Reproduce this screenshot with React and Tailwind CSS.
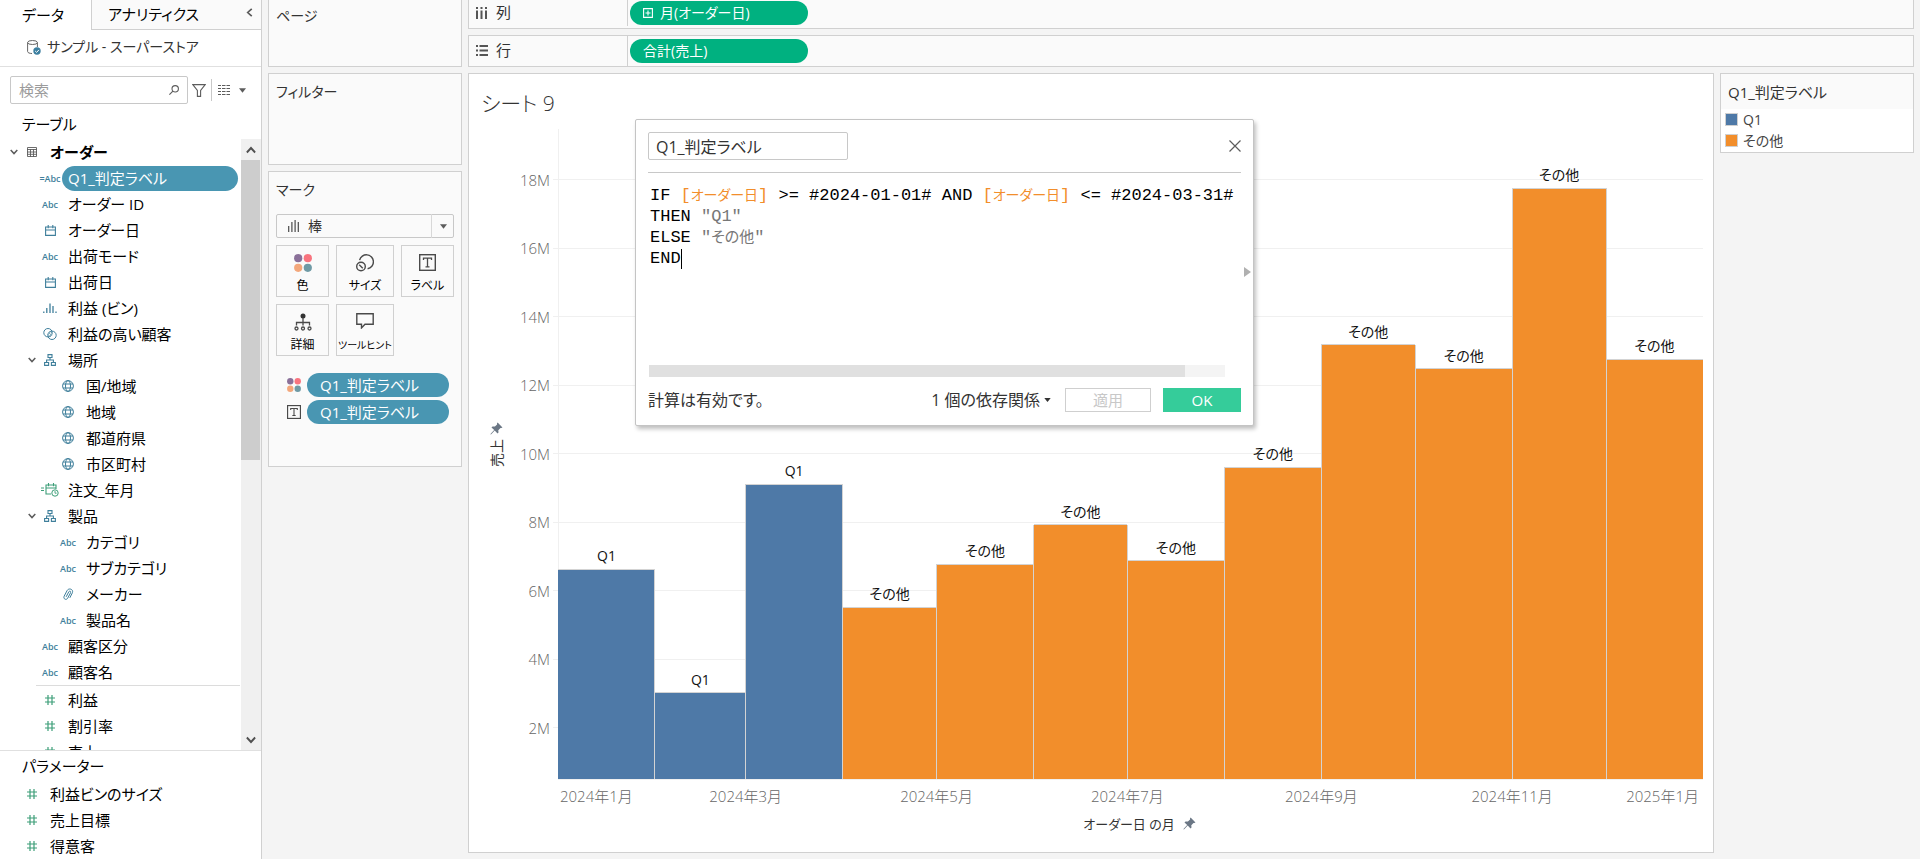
import { useState } from "react";

const FIELDS = [
    { level: 0, icon: "table", label: "オーダー", open: true },
    { level: 1, icon: "calcAbc", label: "Q1_判定ラベル", selected: true },
    { level: 1, icon: "abc", label: "オーダー ID" },
    { level: 1, icon: "date", label: "オーダー日" },
    { level: 1, icon: "abc", label: "出荷モード" },
    { level: 1, icon: "date", label: "出荷日" },
    { level: 1, icon: "bin", label: "利益 (ビン)" },
    { level: 1, icon: "set", label: "利益の高い顧客" },
    { level: 1, icon: "tree", label: "場所", open: true },
    { level: 2, icon: "globe", label: "国/地域" },
    { level: 2, icon: "globe", label: "地域" },
    { level: 2, icon: "globe", label: "都道府県" },
    { level: 2, icon: "globe", label: "市区町村" },
    { level: 1, icon: "calcDate", label: "注文_年月" },
    { level: 1, icon: "tree", label: "製品", open: true },
    { level: 2, icon: "abc", label: "カテゴリ" },
    { level: 2, icon: "abc", label: "サブカテゴリ" },
    { level: 2, icon: "clip", label: "メーカー" },
    { level: 2, icon: "abc", label: "製品名" },
    { level: 1, icon: "abc", label: "顧客区分" },
    { level: 1, icon: "abc", label: "顧客名" },
];

const MEASURES = ["利益", "割引率", "売上"];
const PARAMETERS = ["利益ビンのサイズ", "売上目標", "得意客"];

// days = width of the month on the date axis, value in millions
const MONTHS = [
    { days: 31, value: 6.62, label: "Q1" },
    { days: 29, value: 3.02, label: "Q1" },
    { days: 31, value: 9.1, label: "Q1" },
    { days: 30, value: 5.51, label: "その他" },
    { days: 31, value: 6.77, label: "その他" },
    { days: 30, value: 7.92, label: "その他" },
    { days: 31, value: 6.87, label: "その他" },
    { days: 31, value: 9.6, label: "その他" },
    { days: 30, value: 13.18, label: "その他" },
    { days: 31, value: 12.48, label: "その他" },
    { days: 30, value: 17.75, label: "その他" },
    { days: 31, value: 12.75, label: "その他" },
];

const X_TICKS = [
    { month: 0, label: "2024年1月" },
    { month: 2, label: "2024年3月" },
    { month: 4, label: "2024年5月" },
    { month: 6, label: "2024年7月" },
    { month: 8, label: "2024年9月" },
    { month: 10, label: "2024年11月" },
    { month: 12, label: "2025年1月" },
];

const Y_TICKS = [2, 4, 6, 8, 10, 12, 14, 16, 18];
const Y_MIN = 0.5;
const Y_MAX = 19.48;
const YEAR = 366;

const COLORS = { Q1: "#4e79a7", その他: "#f28e2b" };

/* ---------- icons ---------- */

function Chevron({ className }) {
    return (
        <svg viewBox="0 0 8 6" className={className} fill="none" stroke="currentColor" strokeWidth="1.5">
            <path d="M.7 1l3.3 3.6L7.3 1" />
        </svg>
    );
}

function Caret({ className }) {
    return (
        <svg viewBox="0 0 8 5" className={className} fill="currentColor">
            <path d="M0 0h8L4 5z" />
        </svg>
    );
}

function Pin() {
    return (
        <svg viewBox="0 0 13 13" className="w-[13px] h-[13px] text-[#6b7785]" fill="currentColor">
            <path d="M7.6.6l4.9 4.9-1.2.6-.8-.1-2.2 2.2.2 2.2-1 1L4.7 8.6 1.2 12.2.4 12.5.7 11.7 4.2 8.1 1.5 5.4l1-1 2.4.2L7.1 2.4 7 1.5z" />
        </svg>
    );
}

function ColorDots({ className }) {
    return (
        <svg viewBox="0 0 18 18" className={className}>
            <circle cx="4.2" cy="4.2" r="4.1" fill="#8a7099" />
            <circle cx="13.8" cy="4.2" r="4.1" fill="#f8747f" />
            <circle cx="4.2" cy="13.8" r="4.1" fill="#f3a77b" />
            <circle cx="13.8" cy="13.8" r="4.1" fill="#6f9aa5" />
        </svg>
    );
}

function LabelIcon({ className }) {
    return (
        <svg viewBox="0 0 17 17" className={className} fill="none" stroke="#4a4a4a">
            <rect x=".7" y=".7" width="15.6" height="15.6" strokeWidth="1.4" />
            <path d="M4.5 6V4.2h8V6M8.5 4.2v8.6M6.5 12.8h4" strokeWidth="1.3" />
        </svg>
    );
}

function HashIcon() {
    return (
        <svg viewBox="0 0 10 10" className="w-[10px] h-[10px]" stroke="#3d9e78" fill="none">
            <path d="M3 0v10M7 0v10M0 3h10M0 7h10" strokeWidth="1.2" />
        </svg>
    );
}

function FieldIcon({ name }) {
    if (name === "abc" || name === "calcAbc") {
        return (
            <span className="text-[9px] leading-none font-semibold text-[#3f7f9b] font-['Open_Sans',sans-serif]">
                {name === "calcAbc" ? "=Abc" : "Abc"}
            </span>
        );
    }
    if (name === "table") {
        return (
            <svg viewBox="0 0 10 10" className="w-[10px] h-[10px]" stroke="#5c5c5c" fill="none">
                <path d="M.5.5h9v9h-9zM0 2.5h10M0 5h10M0 7.3h10M3.5 2v8M6.5 2v8" strokeWidth=".9" />
            </svg>
        );
    }
    if (name === "date") {
        return (
            <svg viewBox="0 0 11 11" className="w-[11px] h-[11px]" stroke="#3f7f9b" fill="none">
                <path d="M.6 2h9.8v8.4H.6zM.6 5h9.8M3.2 0v3.2M7.8 0v3.2" strokeWidth="1.1" />
            </svg>
        );
    }
    if (name === "calcDate") {
        return (
            <svg viewBox="0 0 18 14" className="w-[18px] h-[14px]" stroke="#3d9e78" fill="none">
                <path d="M0 5h3M0 7.5h3M10 11H5V2h10v4M5 5h10M7.5 0v3.2M12.5 0v3.2" strokeWidth="1.1" />
                <circle cx="14" cy="10" r="3.2" />
                <path d="M14 8v2.2h1.6" strokeWidth=".9" />
            </svg>
        );
    }
    if (name === "bin") {
        return (
            <svg viewBox="0 0 14 10" className="w-[14px] h-[10px]" stroke="#3f7f9b" fill="none">
                <path d="M.8 8.5V10M3.8 5v5M7 .5V10M10 3v7M13 8.5V10" strokeWidth="1.3" />
            </svg>
        );
    }
    if (name === "set") {
        return (
            <svg viewBox="0 0 14 12" className="w-[14px] h-[12px]" stroke="#3f7f9b" fill="none">
                <circle cx="5" cy="4.7" r="4.2" />
                <circle cx="9" cy="7.3" r="4.2" />
                <path d="M5 6.5l2.5 2.5M5.8 4.6l3 3M7 3.2l2 2" strokeWidth=".8" />
            </svg>
        );
    }
    if (name === "tree") {
        return (
            <svg viewBox="0 0 12 12" className="w-[12px] h-[12px]" stroke="#3f7f9b" fill="none">
                <path d="M4 .6h4v2.9H4zM.6 8.5h4v2.9h-4zM7.4 8.5h4v2.9h-4zM6 3.5V6M2.6 8.5V6h6.8v2.5" strokeWidth="1.1" />
            </svg>
        );
    }
    if (name === "globe") {
        return (
            <svg viewBox="0 0 12 12" className="w-[12px] h-[12px]" stroke="#3f7f9b" fill="none">
                <circle cx="6" cy="6" r="5.4" />
                <ellipse cx="6" cy="6" rx="2.5" ry="5.4" />
                <path d="M1 4h10M1 8h10" />
            </svg>
        );
    }
    return (
        <svg viewBox="0 0 12 13" className="w-[12px] h-[13px]" stroke="#3f7f9b" fill="none" strokeLinecap="round">
            <path d="M4.3 8.5l2.5-4.7c.8-1.4 2.500-.4 1.800.9L5.6 10.3C4.300 12.500 1 11 2.100 8.300L5 2.700C6.600-.4 11.500 1 10.500 4.500L8 9.500" />
        </svg>
    );
}

/* ---------- data pane ---------- */

const INDENT = ["pl-2", "pl-[26px]", "pl-[44px]"];

function FieldRow({ level, icon, label, open, selected }) {
    return (
        <li className={`flex items-center h-[26px] shrink-0 ${INDENT[level]}`}>
            <span className="w-3 flex justify-center">
                {open && <Chevron className="w-2 h-[6px] text-[#5c5c5c]" />}
            </span>
            <span className="w-6 flex justify-center">
                {icon === "hash" ? <HashIcon /> : <FieldIcon name={icon} />}
            </span>
            <span
                className={`pl-[6px] whitespace-nowrap h-[25px] leading-[25px] ${
                    selected ? "flex-1 mr-[3px] rounded-full bg-[#4996b2] text-white" : ""
                } ${level === 0 && icon === "table" ? "font-bold" : ""}`}
            >
                {label}
            </span>
        </li>
    );
}

function DataPane() {
    return (
        <aside className="w-[262px] shrink-0 flex flex-col bg-white border-r border-[#d0d0d0] text-black">
            <div className="flex h-[30px] leading-none">
                <button className="w-[91px] pl-[22px] text-left">データ</button>
                <div className="flex-1 flex items-center justify-between pl-4 pr-[7px] bg-[#fafafa] border-l border-b border-[#d0d0d0]">
                    <button>アナリティクス</button>
                    <button aria-label="折りたたむ" className="pb-1">
                        <Chevron className="w-[9px] h-[7px] rotate-90 text-[#5c5c5c]" />
                    </button>
                </div>
            </div>

            <div className="h-[37px] flex items-center gap-[6px] pl-[27px] pb-[2px] border-b border-[#e0e0e0] text-sm text-[#333]">
                <svg viewBox="0 0 14 15" className="w-[14px] h-[15px]" fill="none" stroke="#666">
                    <ellipse cx="5.5" cy="2.5" rx="4.9" ry="2" />
                    <path d="M.6 2.5v9c0 1.2 2 2 4.4 2M10.4 2.5V7" />
                    <circle cx="10" cy="11" r="3.7" fill="#3c7fa0" stroke="none" />
                    <path d="M8.2 11l1.4 1.4 2.3-2.5" stroke="#fff" />
                </svg>
                <span>サンプル - スーパーストア</span>
            </div>

            <div className="flex items-center pt-[9px] pl-[10px]">
                <label className="flex items-center w-[178px] h-7 px-2 border border-[#c8c8c8] rounded-xs">
                    <input
                        aria-label="検索"
                        placeholder="検索"
                        className="flex-1 min-w-0 outline-none placeholder:text-[#9b9b9b]"
                    />
                    <svg viewBox="0 0 10 10" className="w-[10px] h-[10px]" fill="none" stroke="#5c5c5c" strokeWidth="1.1">
                        <circle cx="6.2" cy="3.8" r="3.2" />
                        <path d="M3.9 6.1L.4 9.6" />
                    </svg>
                </label>
                <button aria-label="フィルター" className="ml-1">
                    <svg viewBox="0 0 14 13" className="w-[14px] h-[13px]" fill="none" stroke="#5c5c5c" strokeWidth="1.1">
                        <path d="M.8.6h12.4L8.6 6.5v5.9H5.4V6.5z" />
                    </svg>
                </button>
                <span className="w-px h-[22px] ml-[5px] bg-[#c8c8c8]" />
                <button aria-label="表示" className="flex items-center gap-[9px] ml-[6px] text-[#5c5c5c]">
                    <svg viewBox="0 0 12 10" className="w-3 h-[10px]" stroke="currentColor" strokeWidth="1">
                        <path d="M0 .5h3M0 3.5h3M0 6.5h3M0 9.5h3M4 .5h3.5M4 3.5h3.5M4 6.5h3.5M4 9.5h3.5M8.5 .5H12M8.5 3.5H12M8.5 6.5H12M8.5 9.5H12" />
                    </svg>
                    <Caret className="w-[7px] h-[5px]" />
                </button>
            </div>

            <h2 className="h-[35px] pl-[22px] pt-[7px] leading-[26px]">テーブル</h2>

            <div className="flex flex-1 min-h-0">
                <ul className="flex-1 flex flex-col overflow-hidden">
                    {FIELDS.map((f) => (
                        <FieldRow key={f.label} {...f} />
                    ))}
                    <li className="h-[2px] shrink-0 ml-9 mr-px border-t border-[#dcdcdc]" />
                    {MEASURES.map((m) => (
                        <FieldRow key={m} level={1} icon="hash" label={m} />
                    ))}
                </ul>
                <div className="w-5 flex flex-col justify-between bg-[#f0f0f0] text-[#505050]">
                    <div>
                        <div className="h-[21px] flex items-center justify-center">
                            <Chevron className="w-[10px] h-[8px] rotate-180" />
                        </div>
                        <div className="w-[19px] h-[300px] bg-[#cdcdcd]" />
                    </div>
                    <div className="h-[21px] flex items-center justify-center">
                        <Chevron className="w-[10px] h-[8px]" />
                    </div>
                </div>
            </div>

            <div className="border-t border-[#e0e0e0]">
                <h2 className="h-[30px] pl-[22px] leading-[30px]">パラメーター</h2>
                <ul>
                    {PARAMETERS.map((p) => (
                        <FieldRow key={p} level={0} icon="hash" label={p} />
                    ))}
                </ul>
            </div>
        </aside>
    );
}

/* ---------- shelves and marks ---------- */

function MarkButton({ label, small, children }) {
    return (
        <button
            className={`h-[52px] flex flex-col items-center justify-between pt-2 pb-px border border-[#d0d0d0] leading-[18px] whitespace-nowrap text-black ${
                small ? "text-[10px]" : "text-xs/[18px]"
            }`}
        >
            {children}
            <span>{label}</span>
        </button>
    );
}

function MarksCard() {
    return (
        <section className="h-[296px] px-[7px] bg-[#fafafa] border border-[#d0d0d0]">
            <h2 className="h-[42px] pt-[7px] leading-[22px] text-sm/[22px]">マーク</h2>
            <div className="relative">
                <select
                    aria-label="マークの種類"
                    className="w-full h-6 pl-[31px] appearance-none border border-[#c8c8c8] rounded-xs text-sm leading-none text-[#333]"
                >
                    <option>棒</option>
                </select>
                <svg viewBox="0 0 11 12" className="absolute left-3 top-[6px] w-[11px] h-3" stroke="#4a4a4a" strokeWidth="1.2">
                    <path d="M.7 6v6M3.9 2v10M7.1 0v12M10.3 2v10" />
                </svg>
                <span className="absolute right-0 top-0 w-[23px] h-6 flex items-center justify-center border-l border-[#d8d8d8] text-[#5c5c5c] pointer-events-none">
                    <Caret className="w-[7px] h-[5px]" />
                </span>
            </div>

            <div className="grid grid-cols-[53px_58px_53px] gap-[7px] mt-[7px]">
                <MarkButton label="色">
                    <ColorDots className="w-[18px] h-[18px]" />
                </MarkButton>
                <MarkButton label="サイズ">
                    <svg viewBox="0 0 18 18" className="w-[18px] h-[18px]" fill="none" stroke="#4a4a4a" strokeWidth="1.4">
                        <path d="M3.6 6.2a7 7 0 1 1 8 8.5" />
                        <circle cx="5" cy="12.5" r="4.3" />
                        <path d="M3.2 10.7l3.6 3.6" />
                    </svg>
                </MarkButton>
                <MarkButton label="ラベル">
                    <LabelIcon className="w-[17px] h-[17px]" />
                </MarkButton>
                <MarkButton label="詳細">
                    <svg viewBox="0 0 18 18" className="w-[18px] h-[18px]" fill="none" stroke="#4a4a4a" strokeWidth="1.3">
                        <circle cx="9" cy="3" r="2.5" fill="#333" stroke="none" />
                        <path d="M9 5v7.5M2.5 12.5V9.5h13v3" />
                        <circle cx="2.5" cy="15.5" r="1.5" />
                        <circle cx="9" cy="15.5" r="1.5" />
                        <circle cx="15.5" cy="15.5" r="1.5" />
                    </svg>
                </MarkButton>
                <MarkButton label="ツールヒント" small>
                    <svg viewBox="0 0 18 16" className="w-[18px] h-4" fill="none" stroke="#4a4a4a" strokeWidth="1.4">
                        <path d="M.8.8h16.4v10.4H9L5.5 14.9v-3.7H.8z" />
                    </svg>
                </MarkButton>
            </div>

            <div className="flex flex-col gap-[3px] mt-[17px] pl-[11px] pr-[5px]">
                <div className="flex items-center gap-[6px]">
                    <ColorDots className="w-[14px] h-[14px]" />
                    <button className="flex-1 h-6 pl-[13px] rounded-full bg-[#4996b2] text-left leading-6 text-white">Q1_判定ラベル</button>
                </div>
                <div className="flex items-center gap-[6px]">
                    <LabelIcon className="w-[14px] h-[14px]" />
                    <button className="flex-1 h-6 pl-[13px] rounded-full bg-[#4996b2] text-left leading-6 text-white">Q1_判定ラベル</button>
                </div>
            </div>
        </section>
    );
}

function Shelf({ icon, label, className, children }) {
    return (
        <div className={`flex items-center bg-[#fafafa] border border-[#d0d0d0] ${className}`}>
            <div className="w-[159px] self-stretch flex items-center gap-2 pl-[7px] pb-px border-r border-[#d0d0d0]">
                {icon}
                <span>{label}</span>
            </div>
            <button className="w-[178px] h-6 ml-[2px] flex items-center gap-[7px] pl-[13px] rounded-full bg-[#00b180] text-sm/6 text-white">
                {children}
            </button>
        </div>
    );
}

/* ---------- chart ---------- */

const yPos = (v) => `${((Y_MAX - v) / (Y_MAX - Y_MIN)) * 100}%`;
const xPos = (days) => `${(days / YEAR) * 100}%`;
const startOf = (month) => MONTHS.slice(0, month).reduce((sum, m) => sum + m.days, 0);

function Chart() {
    return (
        <svg className="w-full h-full overflow-visible" fontSize="15">
            <g stroke="#f0f0f0" shapeRendering="crispEdges">
                {Y_TICKS.map((t) => (
                    <line key={t} x1="-5" x2="100%" y1={yPos(t)} y2={yPos(t)} />
                ))}
                <line x1="0" x2="0" y1="0" y2="100%" />
                <line x1="0" x2="100%" y1="100%" y2="100%" />
            </g>

            {MONTHS.map((m, i) => (
                <g key={i}>
                    <rect
                        x={xPos(startOf(i))}
                        y={yPos(m.value)}
                        width={xPos(m.days)}
                        height={`${((m.value - Y_MIN) / (Y_MAX - Y_MIN)) * 100}%`}
                        fill={COLORS[m.label]}
                        shapeRendering="crispEdges"
                    />
                    <g stroke="#d3d3d3" shapeRendering="crispEdges">
                        <line x1={xPos(startOf(i))} x2={xPos(startOf(i + 1))} y1={yPos(m.value)} y2={yPos(m.value)} />
                        {i > 0 && (
                            <line
                                x1={xPos(startOf(i))}
                                x2={xPos(startOf(i))}
                                y1={yPos(Math.max(m.value, MONTHS[i - 1].value))}
                                y2="100%"
                            />
                        )}
                    </g>
                    <text
                        x={xPos(startOf(i) + m.days / 2)}
                        y={yPos(m.value)}
                        dy="-8"
                        textAnchor="middle"
                        fontSize="14"
                        fill="#111"
                    >
                        {m.label}
                    </text>
                </g>
            ))}

            <g fill="#666" fontWeight="300">
                {Y_TICKS.map((t) => (
                    <text key={t} x="-8" y={yPos(t)} dy="6" textAnchor="end">
                        {t}M
                    </text>
                ))}
                {X_TICKS.map((t, i) => (
                    <text
                        key={t.label}
                        x={xPos(startOf(t.month))}
                        y="100%"
                        dx={i === 0 ? 2 : i === X_TICKS.length - 1 ? -4 : 0}
                        dy="23"
                        textAnchor={i === 0 ? "start" : i === X_TICKS.length - 1 ? "end" : "middle"}
                    >
                        {t.label}
                    </text>
                ))}
            </g>
        </svg>
    );
}

function Sheet({ children }) {
    return (
        <main className="relative flex-1 min-w-0 flex flex-col bg-white border border-[#d0d0d0]">
            <h1 className="h-[55px] pl-3 pt-[14px] text-[21px] leading-[30px] font-light">シート 9</h1>
            <div className="flex-1 min-h-0 flex pr-[10px]">
                <div className="w-[89px] flex flex-col items-start justify-center gap-1 pb-5 pl-[21px]">
                    <Pin />
                    <span className="rotate-180 text-sm leading-[14px] [writing-mode:vertical-rl] [text-orientation:sideways]">売上</span>
                </div>
                <div className="flex-1 min-w-0">
                    <Chart />
                </div>
            </div>
            <div className="h-[73px] pl-[107px] pr-[10px] pt-9 flex items-start justify-center gap-2 text-[13px] leading-[18px]">
                <span>オーダー日 の月</span>
                <span className="pt-[2px]">
                    <Pin />
                </span>
            </div>
            {children}
        </main>
    );
}

/* ---------- calculation dialog ---------- */

function Field({ name }) {
    return (
        <span className="text-[#f28e2b]">
            [<span className="text-sm/[21px]">{name}</span>]
        </span>
    );
}

function CalcDialog() {
    const [name, setName] = useState("Q1_判定ラベル");

    return (
        <div
            role="dialog"
            aria-label="計算フィールドの編集"
            className="absolute left-[166px] top-[45px] w-[619px] h-[307px] flex flex-col px-3 bg-white border border-[#c4c4c4] rounded-xs shadow-[2px_3px_4px_rgba(0,0,0,0.25)]"
        >
            <div className="h-[53px] shrink-0 flex items-center justify-between border-b border-[#c8c8c8]">
                <input
                    aria-label="名前"
                    value={name}
                    onChange={(e) => setName(e.target.value)}
                    className="w-[200px] h-7 px-[7px] border border-[#c8c8c8] rounded-xs text-base text-[#333] outline-none"
                />
                <button aria-label="閉じる">
                    <svg viewBox="0 0 12 12" className="w-3 h-3" stroke="#5c5c5c" strokeWidth="1.2">
                        <path d="M.5.5l11 11M11.5.5l-11 11" />
                    </svg>
                </button>
            </div>

            <div
                role="textbox"
                aria-multiline="true"
                aria-label="計算式"
                className="flex-1 pt-3 pl-[2px] whitespace-pre text-[17px] leading-[21px] text-black font-['Liberation_Mono','Noto_Sans_CJK_JP',monospace]"
            >
                <div className="h-[21px]">
                    IF <Field name="オーダー日" /> &gt;= #2024-01-01# AND <Field name="オーダー日" /> &lt;= #2024-03-31#
                </div>
                <div className="h-[21px]">
                    THEN <span className="text-[#777]">"Q1"</span>
                </div>
                <div className="h-[21px]">
                    ELSE{" "}
                    <span className="text-[#777]">
                        "<span className="text-[15px]/[21px]">その他</span>"
                    </span>
                </div>
                <div className="flex items-center h-[21px]">
                    END
                    <span className="w-px h-5 bg-black" />
                </div>
            </div>

            <div className="h-3 shrink-0 ml-px mr-4 bg-[#f4f4f4]">
                <div className="w-[536px] h-3 bg-[#e0e0e0]" />
            </div>

            <div className="h-[48px] shrink-0 flex items-center pb-[2px] text-base text-[#333]">
                <span className="flex-1">計算は有効です。</span>
                <button className="flex items-center gap-1">
                    1 個の依存関係
                    <Caret className="w-[7px] h-1" />
                </button>
                <button disabled className="w-[86px] h-6 ml-[14px] border border-[#cfcfcf] text-[15px] leading-none text-[#c8c8c8]">
                    適用
                </button>
                <button className="w-[78px] h-6 ml-3 bg-[#35cc9a] text-[15px] leading-none text-white">OK</button>
            </div>

            <svg viewBox="0 0 7 10" className="absolute right-[2px] top-[147px] w-[7px] h-[10px]" fill="#b0b0b0">
                <path d="M0 0l7 5-7 5z" />
            </svg>
        </div>
    );
}

function Legend() {
    return (
        <section className="w-[194px] self-start bg-white border border-[#d0d0d0]">
            <h2 className="h-[35px] pl-[7px] leading-[36px] bg-[#fafafa]">Q1_判定ラベル</h2>
            <ul className="pl-1 h-[43px]">
                {["Q1", "その他"].map((k) => (
                    <li key={k} className="flex items-center gap-[5px] h-[21px] text-sm text-[#444]">
                        <span className="w-[13px] h-[13px] border border-[#d0d0d0]" style={{ backgroundColor: COLORS[k] }} />
                        {k}
                    </li>
                ))}
            </ul>
        </section>
    );
}

export default function App() {
    return (
        <div className="flex h-screen overflow-hidden bg-[#f4f4f4] text-[15px] text-[#333] font-['Open_Sans','Noto_Sans_CJK_JP',sans-serif] [font-feature-settings:'palt']">
            <DataPane />

            {/* CARDS */}
            <div className="w-[194px] shrink-0 ml-[6px] flex flex-col gap-[6px]">
                <section className="h-[67px] pl-[7px] pt-[5px] text-sm/[22px] bg-[#fafafa] border border-t-0 border-[#d0d0d0]">ページ</section>
                <section className="h-[92px] pl-[7px] pt-[7px] text-sm/[22px] bg-[#fafafa] border border-[#d0d0d0]">フィルター</section>
                <MarksCard />
            </div>

            {/* WORKSPACE */}
            <div className="flex-1 min-w-0 flex flex-col gap-[6px] pl-[6px] pr-[6px] pb-[6px]">
                <Shelf
                    label="列"
                    className="h-[29px] border-t-0 pb-[2px]"
                    icon={
                        <svg viewBox="0 0 12 12" className="w-3 h-3" fill="#555">
                            <path d="M0 0h2v2H0zM4.500 0h2v2h-2zM9 0h2v2H9zM0 3.500h2V12H0zM4.500 3.500h2V12h-2zM9 3.500h2V12H9z" />
                        </svg>
                    }
                >
                    <svg viewBox="0 0 10 10" className="w-[10px] h-[10px]" fill="none" stroke="#fff" strokeWidth="1.1">
                        <path d="M.6.6h8.8v8.8H.6zM5 2.5v5M2.5 5h5" />
                    </svg>
                    月(オーダー日)
                </Shelf>
                <Shelf
                    label="行"
                    className="h-8"
                    icon={
                        <svg viewBox="0 0 12 11" className="w-3 h-[11px]" fill="#555">
                            <path d="M0 0h2v2H0zM0 4.500h2v2H0zM0 9h2v2H0zM3.500 0H12v2H3.500zM3.500 4.500H12v2H3.500zM3.500 9H12v2H3.500z" />
                        </svg>
                    }
                >
                    合計(売上)
                </Shelf>
                <div className="flex-1 min-h-0 flex gap-[6px]">
                    <Sheet>
                        <CalcDialog />
                    </Sheet>
                    <Legend />
                </div>
            </div>
        </div>
    );
}
